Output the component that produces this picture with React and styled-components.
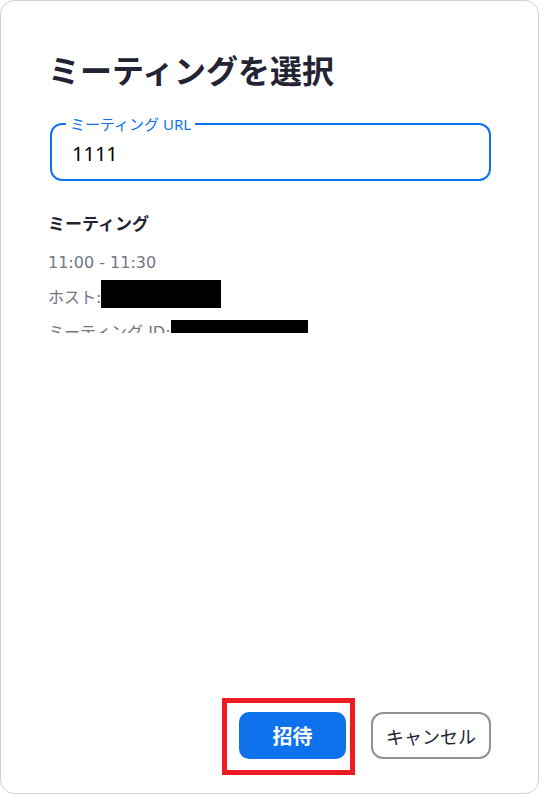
import { useState } from 'react';
import styled, { createGlobalStyle } from 'styled-components';

const GlobalStyle = createGlobalStyle({
  '*': { boxSizing: 'border-box' },
  body: {
    margin: 0,
    background: '#ffffff',
    fontFamily: '"Noto Sans", "Noto Sans CJK JP", sans-serif',
    color: '#232333',
  },
});

const Dialog = styled.div({
  width: 539,
  height: 794,
  border: '1px solid #d2d2d6',
  borderRadius: 14,
  background: '#ffffff',
  display: 'flex',
  flexDirection: 'column',
  padding: '50px 47px 34px 47px',
});

const Title = styled.h1({
  margin: 0,
  fontSize: 32,
  lineHeight: '40px',
  fontWeight: 700,
  color: '#232333',
});

const Field = styled.fieldset({
  margin: '24px 0 0 2px',
  padding: '0 14px 6px',
  minWidth: 0,
  border: '2px solid #0e72ed',
  borderRadius: 12,
});

const Legend = styled.legend({
  padding: '0 4px',
  fontSize: 15,
  lineHeight: '18px',
  color: '#0e72ed',
});

const UrlInput = styled.input({
  display: 'block',
  width: '100%',
  height: 40,
  border: 'none',
  outline: 'none',
  padding: '0 0 0 6px',
  fontFamily: 'inherit',
  fontSize: 20,
  color: '#000000',
  background: 'transparent',
});

const Scroll = styled.div({
  marginTop: 31,
  height: 121,
  overflow: 'hidden',
});

const MeetingName = styled.div({
  fontSize: 17,
  lineHeight: '24px',
  fontWeight: 700,
  color: '#232333',
  marginBottom: 9,
});

// Latin glyphs here are the wide Verdana-like kind, so DejaVu comes first
const Detail = styled.div({
  fontFamily: '"DejaVu Sans", "Noto Sans CJK JP", sans-serif',
  fontSize: 16,
  lineHeight: '35px',
  color: '#747487',
  whiteSpace: 'nowrap',
});

const Redacted = styled.span(({ $w, $h, $drop }) => ({
  display: 'inline-block',
  width: $w,
  height: $h,
  background: '#000000',
  verticalAlign: $drop,
}));

const Footer = styled.div({
  marginTop: 'auto',
  display: 'flex',
  justifyContent: 'flex-end',
  gap: 25,
});

const Marked = styled.div({
  position: 'relative',
  display: 'flex',
  '&::after': {
    content: '""',
    position: 'absolute',
    inset: '-14px -9px -16px -17px',
    border: '5px solid #ed1c24',
    pointerEvents: 'none',
  },
});

const Button = styled.button(({ $primary }) => ({
  height: 47,
  width: $primary ? 107 : 120,
  padding: 0,
  borderRadius: $primary ? 10 : 12,
  border: $primary ? 'none' : '2px solid #909099',
  background: $primary ? '#0e72ed' : '#ffffff',
  color: $primary ? '#ffffff' : '#232333',
  fontFamily: 'inherit',
  fontSize: $primary ? 20 : 18,
  fontWeight: $primary ? 700 : 400,
  cursor: 'pointer',
}));

const App = () => {
  const [url, setUrl] = useState('1111');

  return (
    <>
      <GlobalStyle />
      <Dialog>
        <Title>ミーティングを選択</Title>
        <Field>
          <Legend>ミーティング URL</Legend>
          <UrlInput value={url} onChange={e => setUrl(e.target.value)} />
        </Field>
        <Scroll>
          <MeetingName>ミーティング</MeetingName>
          <Detail>11:00 - 11:30</Detail>
          <Detail>
            ホスト:
            <Redacted $w={120} $h={28} $drop="-5px" />
          </Detail>
          <Detail>
            ミーティング ID:
            <Redacted $w={137} $h={24} $drop="-6px" />
          </Detail>
        </Scroll>
        <Footer>
          <Marked>
            <Button $primary>招待</Button>
          </Marked>
          <Button>キャンセル</Button>
        </Footer>
      </Dialog>
    </>
  );
};

export default App;
